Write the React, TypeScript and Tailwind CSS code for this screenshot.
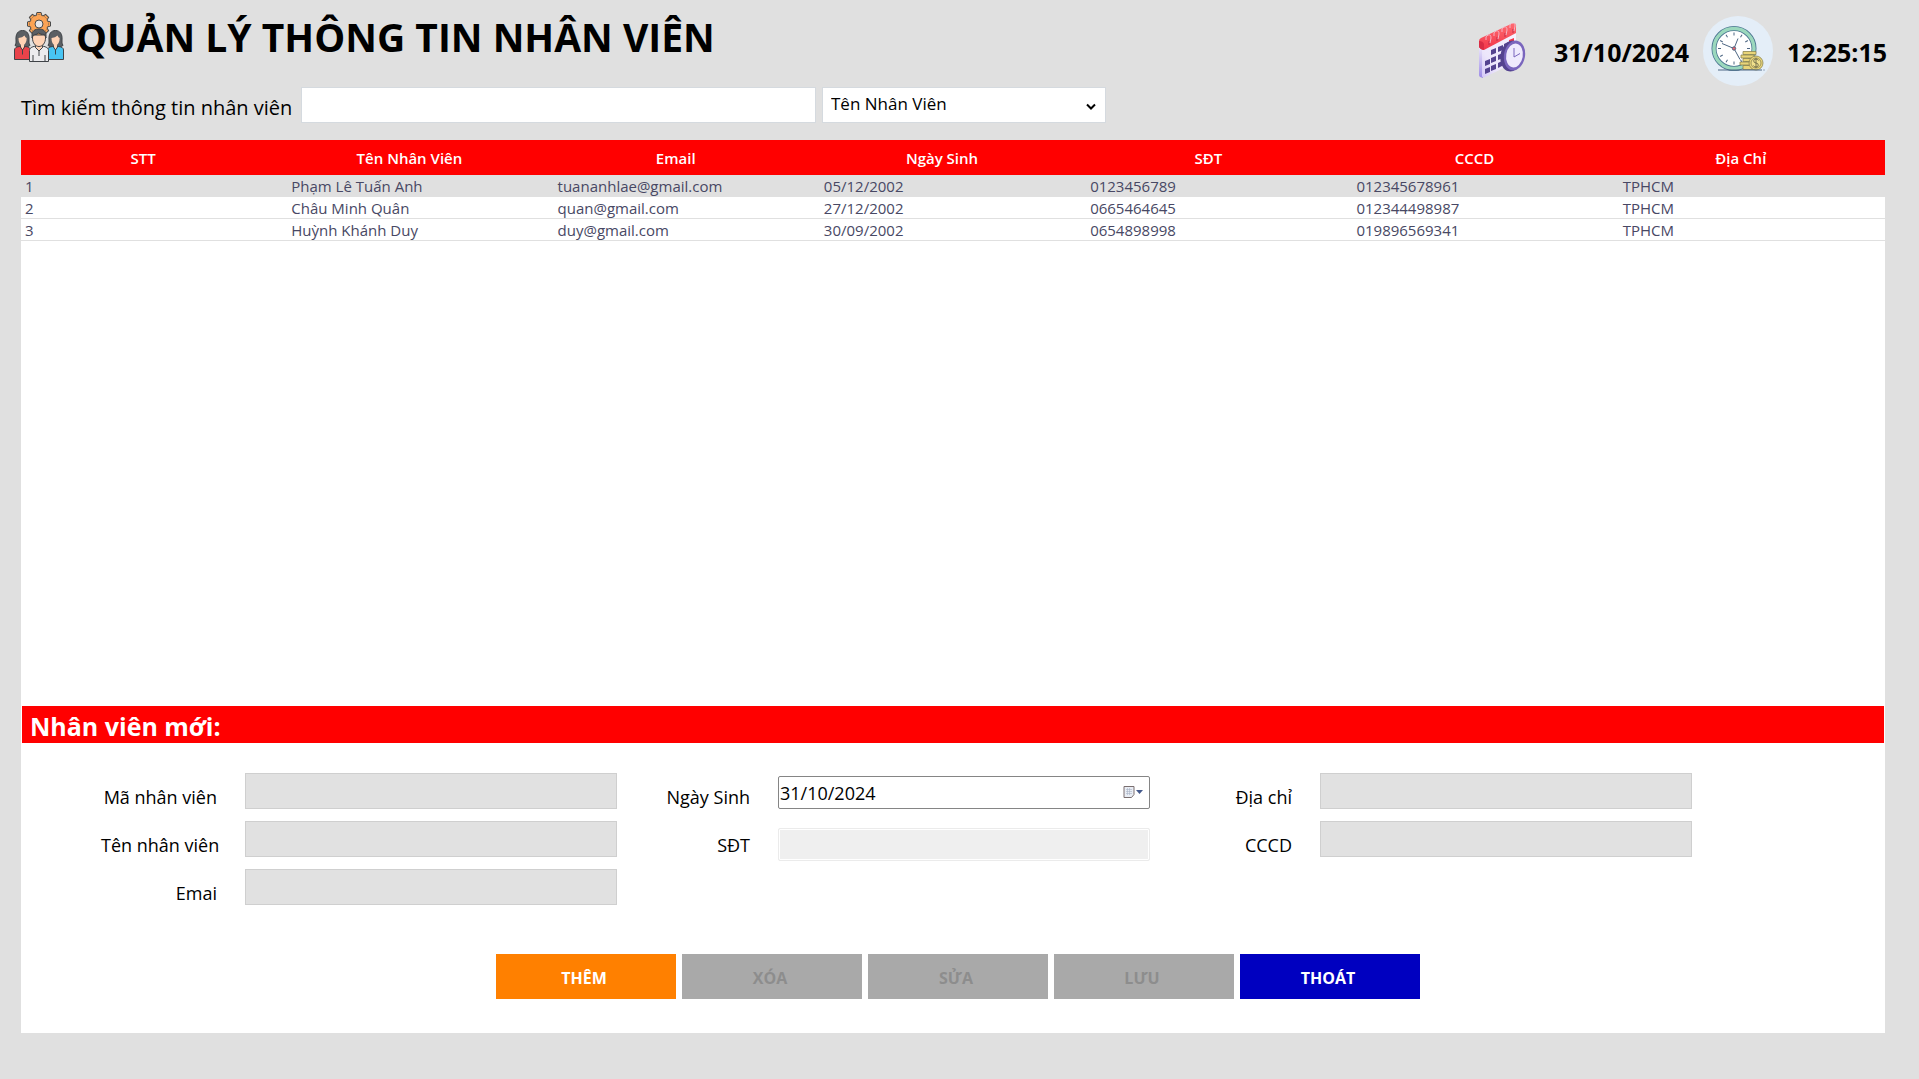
import { useState } from 'react';
import type { ReactNode } from 'react';

type Employee = {
  name: string;
  email: string;
  birthday: string;
  phone: string;
  idCard: string;
  address: string;
};

const employees: Employee[] = [
  { name: 'Phạm Lê Tuấn Anh', email: 'tuananhlae@gmail.com', birthday: '05/12/2002', phone: '0123456789', idCard: '012345678961', address: 'TPHCM' },
  { name: 'Châu Minh Quân', email: 'quan@gmail.com', birthday: '27/12/2002', phone: '0665464645', idCard: '012344498987', address: 'TPHCM' },
  { name: 'Huỳnh Khánh Duy', email: 'duy@gmail.com', birthday: '30/09/2002', phone: '0654898998', idCard: '019896569341', address: 'TPHCM' },
];

const columns = ['STT', 'Tên Nhân Viên', 'Email', 'Ngày Sinh', 'SĐT', 'CCCD', 'Địa Chỉ'];

const actions = [
  { label: 'THÊM', style: 'bg-[#ff8000] text-white', disabled: false },
  { label: 'XÓA', style: 'bg-[#a9a9a9] text-[#8d8d8d]', disabled: true },
  { label: 'SỬA', style: 'bg-[#a9a9a9] text-[#8d8d8d]', disabled: true },
  { label: 'LƯU', style: 'bg-[#a9a9a9] text-[#8d8d8d]', disabled: true },
  { label: 'THOÁT', style: 'bg-[#0000c0] text-white', disabled: false },
];

const gearTeeth = [0, 45, 90, 135, 180, 225, 270, 315];
const hours = [0, 30, 60, 90, 120, 150, 180, 210, 240, 270, 300, 330];

function Person({ x, shirt }: { x: number; shirt: string }) {
  return (
    <g transform={`translate(${x} 0)`} stroke="#3f4347" strokeWidth="1" strokeLinejoin="round">
      <path d="M1 33.500q1.500-2 1-5.500c-.5-6 2-9.500 6.500-9.500s7 3.500 6.500 9.500q-.5 3.500 1 5.500l-3 1.500H4z" fill="#5b5f63" />
      <path d="M.5 47.500V38c0-2 1.500-3 5-3.500h6c3.500.5 5 1.500 5 3.500v9.500z" fill={shirt} />
      <path d="M4.500 26q4-.5 6-2.500 .8 2 2.200 2.500c0 4-1.500 6-2.700 6.800V35l-1.500 2.500L7 35v-2.200C5.700 32 4.500 30 4.500 26z" fill="#ffd3b5" stroke="none" />
      <path d="M6 34.500l2.500 3.500 2.500-3.500M8.500 38v4.500" fill="none" />
    </g>
  );
}

function StaffIcon() {
  return (
    <svg viewBox="0 0 50 50" className="size-[50px]" aria-hidden="true">
      <g transform="translate(25 12)" stroke="#4a4a4a" strokeWidth="1">
        {gearTeeth.map((a) => (
          <path key={a} d="M-3-8l.9-3.500h4.200l.9 3.500z" transform={`rotate(${a})`} fill="#fba355" />
        ))}
        <circle r="9" fill="#fba355" />
        {gearTeeth.map((a) => (
          <path key={a} d="M-2.400-7h4.800v-2h-4.800z" transform={`rotate(${a})`} fill="#fba355" stroke="none" />
        ))}
        <circle r="4" fill="#e6e6ea" />
      </g>
      <Person x={0} shirt="#e8434a" />
      <Person x={33} shirt="#48c4f2" />
      <g stroke="#3f4347" strokeWidth="1" strokeLinejoin="round">
        <path d="M15.500 49.500V38.500c0-2.500 2-3.500 6-4.500h7c4 1 6 2 6 4.500v11z" fill="#ececee" />
        <path d="M21.500 33h7v2.500L25 39l-3.500-3.500z" fill="#ffd3b5" />
        <path d="M18.500 26c0 5 3 8.500 6.500 8.500s6.500-3.500 6.500-8.500v-3h-13z" fill="#ffd3b5" />
        <path d="M18 26v-3c0-4 3-6 7-6s7 2 7 6v3l-1.500-3.500q-4 0-6-1.500-1.500 1.500-5 2z" fill="#5b5f63" />
        <path d="M21.500 35.500L25 39l3.500-3.500M25 39v5M19 43v6M31 43v6" fill="none" />
      </g>
    </svg>
  );
}

function CalendarIcon() {
  return (
    <svg viewBox="0 0 48 56" className="h-14 w-12" aria-hidden="true">
      <defs>
        <linearGradient id="page" x1="1" y1="0" x2="0" y2="1">
          <stop offset="0" stopColor="#f7f3ff" />
          <stop offset=".7" stopColor="#ece6fb" />
          <stop offset="1" stopColor="#d5c9f7" />
        </linearGradient>
        <linearGradient id="side" x1="0" y1="0" x2="0" y2="1">
          <stop offset="0" stopColor="#ece6fb" />
          <stop offset="1" stopColor="#9c8ae6" />
        </linearGradient>
        <linearGradient id="band" x1="0" y1="0" x2="0" y2="1">
          <stop offset="0" stopColor="#ff6b70" />
          <stop offset="1" stopColor="#f2364a" />
        </linearGradient>
      </defs>
      <path d="M1 24l4 3v28l-3-1q-1-1-1-2z" fill="url(#side)" />
      <path d="M4 27L38 10v27q0 2-2 3L7 54q-3 1-3-1z" fill="url(#page)" />
      <path d="M1 18q0-2 2-3L34 .5q4-1 4 2V10L6 27q-5-1-5-4z" fill="url(#band)" />
      <path d="M1 18q4 0 5 3v6q-5-1-5-4z" fill="#d92c44" />
      <path d="M11 22v-4m8 0v-4m8 0v-4m8 0V6" stroke="#c42a48" strokeWidth="1" />
      <path d="M8 17q-1-4 2-5t3 3l-1 5M16 13q-1-4 2-5t3 3l-1 5M24 9q-1-4 2-5t3 3l-1 5M32 5q-1-4 2-5t3 3l-1 5" fill="none" stroke="#f3b3c4" strokeWidth="1" />
      <g fill="#54438f">
        <path d="M13 27l5-2v5l-5 2zM20 24l5-2v5l-5 2zM26 21l4-2v5l-4 2z" />
        <path d="M7 38l5-2v5l-5 2zM13 35l5-2v5l-5 2zM20 32l5-2v5l-5 2z" />
        <path d="M7 46l5-2v5l-5 2zM13 43l5-2v5l-5 2zM20 40l4-2v5l-4 2z" />
      </g>
      <path d="M31 17l5-2v4l-5 1z" fill="#f2364a" />
      <ellipse cx="33.500" cy="33" rx="11" ry="15.500" transform="rotate(10 33.500 33)" fill="#54438f" />
      <ellipse cx="36.500" cy="32.500" rx="10.500" ry="15" transform="rotate(10 36.500 32.500)" fill="#7a66bd" />
      <ellipse cx="36.500" cy="32.500" rx="8.300" ry="12" transform="rotate(10 36.500 32.500)" fill="#efeafd" />
      <path d="M36 25v9l6-3.500" fill="none" stroke="#7a66bd" strokeWidth="1" />
    </svg>
  );
}

function ClockIcon() {
  return (
    <svg viewBox="0 0 70 70" className="size-[70px]" aria-hidden="true">
      <circle cx="35" cy="35" r="35" fill="#e4eef8" />
      <circle cx="31" cy="32.500" r="20" fill="#fff" stroke="#4b7591" strokeWidth="5" />
      <circle cx="31" cy="32.500" r="20" fill="none" stroke="#9bd8bd" strokeWidth="3.400" />
      <g transform="translate(31 32.500)" stroke="#4d6683" strokeWidth="1">
        {hours.map((a) => (
          <path key={a} d="M0-16v3" transform={`rotate(${a})`} />
        ))}
        <path d="M0 0l4-10M0 0l-12-5M0 0l6 11" />
        <circle r="1.700" fill="#f0606a" />
      </g>
      <g fill="#e9d579" stroke="#8c8552" strokeWidth=".8">
        <path d="M40 35.500h13v3H40zM38 39h13v3H38zM40 42.500h13v3H40zM37 46h13v3H37zM40 49.500h13v4H40z" />
        <circle cx="53" cy="47" r="7" />
        <circle cx="53" cy="47" r="5" fill="#f0e08c" />
      </g>
      <path d="M55.500 44.500q-1-1.500-2.500-1.500-2.300 0-2.300 1.900T53 47t2.300 2.100T53 51q-1.800 0-2.500-1.500M53 42v10" fill="none" stroke="#6d6a48" strokeWidth=".9" />
      <path d="M15 54h44m1.500 0h1" stroke="#4d6683" strokeWidth="1" />
    </svg>
  );
}

function DropIcon() {
  return (
    <svg viewBox="0 0 20 14" className="h-3.5 w-5" aria-hidden="true">
      <path d="M1 1.500h10v8l-2.500 3H1z" fill="#e9edf4" stroke="#7a6f70" />
      <path d="M3 4.500h6M3 6.500h6M3 8.500h6M4.500 3v7M6.500 3v7" stroke="#a9b3c6" strokeWidth=".6" />
      <path d="M13 5h7l-3.500 4z" fill="#44598c" />
    </svg>
  );
}

function Field({ id, label, children }: { id: string; label: string; children?: ReactNode }) {
  return (
    <div className="flex h-9 items-center">
      <label htmlFor={id} className="w-36 pt-3 pr-7 text-right text-lg leading-6 whitespace-nowrap">
        {label}
      </label>
      {children ?? (
        <input id={id} disabled className="h-9 w-[372px] border border-[#cfcfcf] bg-[#e1e1e1] px-2 text-lg" />
      )}
    </div>
  );
}

export default function App() {
  const [selected, setSelected] = useState(0);

  return (
    <div className="min-h-screen bg-[#e0e0e0] font-['Open_Sans','Noto_Sans',sans-serif] text-black">
      <header className="flex h-[87px] items-start justify-between pr-8 pl-3.5">
        <div className="flex items-center gap-3 pt-2.5">
          <StaffIcon />
          <h1 className="text-[39px] leading-[54px] font-bold whitespace-nowrap">QUẢN LÝ THÔNG TIN NHÂN VIÊN</h1>
        </div>
        <div className="flex items-center pt-4 text-[25px] leading-8 font-bold">
          <CalendarIcon />
          <time className="ml-7 pt-0.5">31/10/2024</time>
          <span className="mx-3.5">
            <ClockIcon />
          </span>
          <time className="pt-0.5">12:25:15</time>
        </div>
      </header>

      <main className="pr-[34px] pl-[21px]">
        <div className="flex h-9 items-center">
          <label htmlFor="search" className="w-[280px] pt-1.5 text-xl leading-7 whitespace-nowrap">
            Tìm kiếm thông tin nhân viên
          </label>
          <input id="search" type="text" className="h-9 w-[515px] border border-[#d5dadf] bg-white px-2 text-lg outline-none" />
          <div className="relative ml-1.5">
            <select
              aria-label="Tìm theo"
              className="h-9 w-[284px] appearance-none border border-[#d5dadf] bg-white pb-0.5 pl-2 text-[17px] leading-6 outline-none"
            >
              <option>Tên Nhân Viên</option>
              <option>Email</option>
              <option>SĐT</option>
              <option>CCCD</option>
            </select>
            <svg viewBox="0 0 10 8" className="pointer-events-none absolute top-4 right-2.5 h-2 w-2.5" aria-hidden="true">
              <path d="M1 1.500l4 4 4-4" fill="none" stroke="#000" strokeWidth="2" />
            </svg>
          </div>
        </div>

        <section className="mt-[17px] bg-white">
          <div className="h-[566px] overflow-auto">
            <table className="w-full table-fixed border-collapse text-left">
              <thead>
                <tr className="h-[35px] bg-[#ff0000] text-[15px] leading-5 text-white">
                  {columns.map((c) => (
                    <th key={c} scope="col" className="p-0 pr-[22px] text-center font-semibold">
                      {c}
                    </th>
                  ))}
                </tr>
              </thead>
              <tbody className="text-[15px] leading-5 text-[#484864]">
                {employees.map((e, i) => (
                  <tr
                    key={e.idCard}
                    onClick={() => setSelected(i)}
                    className={i === selected ? 'border-b border-[#e0e0e0] bg-[#e0e0e0]' : 'border-b border-[#e0e0e0]'}
                  >
                    {[i + 1, e.name, e.email, e.birthday, e.phone, e.idCard, e.address].map((value, n) => (
                      <td key={columns[n]} className="p-0 pt-px pl-1 whitespace-nowrap">
                        {value}
                      </td>
                    ))}
                  </tr>
                ))}
              </tbody>
            </table>
          </div>

          <h2 className="mx-px bg-[#ff0000] pt-[3px] pl-2 text-[25px] leading-[34px] font-bold text-white">Nhân viên mới:</h2>

          <form className="pt-[30px] pb-[34px]" onSubmit={(e) => e.preventDefault()}>
            <div className="grid grid-cols-[533px_542px_516px] pl-20">
              <div className="flex flex-col gap-3">
                <Field id="code" label="Mã nhân viên" />
                <Field id="name" label="Tên nhân viên" />
                <Field id="email" label="Emai" />
              </div>
              <div className="flex flex-col gap-3">
                <Field id="birthday" label="Ngày Sinh">
                  <div className="mt-0.5 flex h-[33px] w-[372px] items-center rounded-xs border border-[#858585] bg-white pr-1.5">
                    <input id="birthday" type="text" defaultValue="31/10/2024" className="min-w-0 flex-1 pt-0.5 pl-px text-lg leading-6 outline-none" />
                    <button type="button" aria-label="Chọn ngày">
                      <DropIcon />
                    </button>
                  </div>
                </Field>
                <Field id="phone" label="SĐT">
                  <input id="phone" disabled className="mt-2.5 h-[33px] w-[372px] rounded-xs border border-[#ebebeb] bg-[#efefef] px-2 inset-ring inset-ring-white" />
                </Field>
              </div>
              <div className="flex flex-col gap-3">
                <Field id="address" label="Địa chỉ" />
                <Field id="idCard" label="CCCD" />
              </div>
            </div>

            <div className="mt-[49px] flex justify-center gap-1.5 pl-2.5">
              {actions.map((a) => (
                <button
                  key={a.label}
                  type="button"
                  disabled={a.disabled}
                  className={`h-[45px] w-[180px] pt-0.5 pr-1 text-base font-bold ${a.style}`}
                >
                  {a.label}
                </button>
              ))}
            </div>
          </form>
        </section>
      </main>
    </div>
  );
}
